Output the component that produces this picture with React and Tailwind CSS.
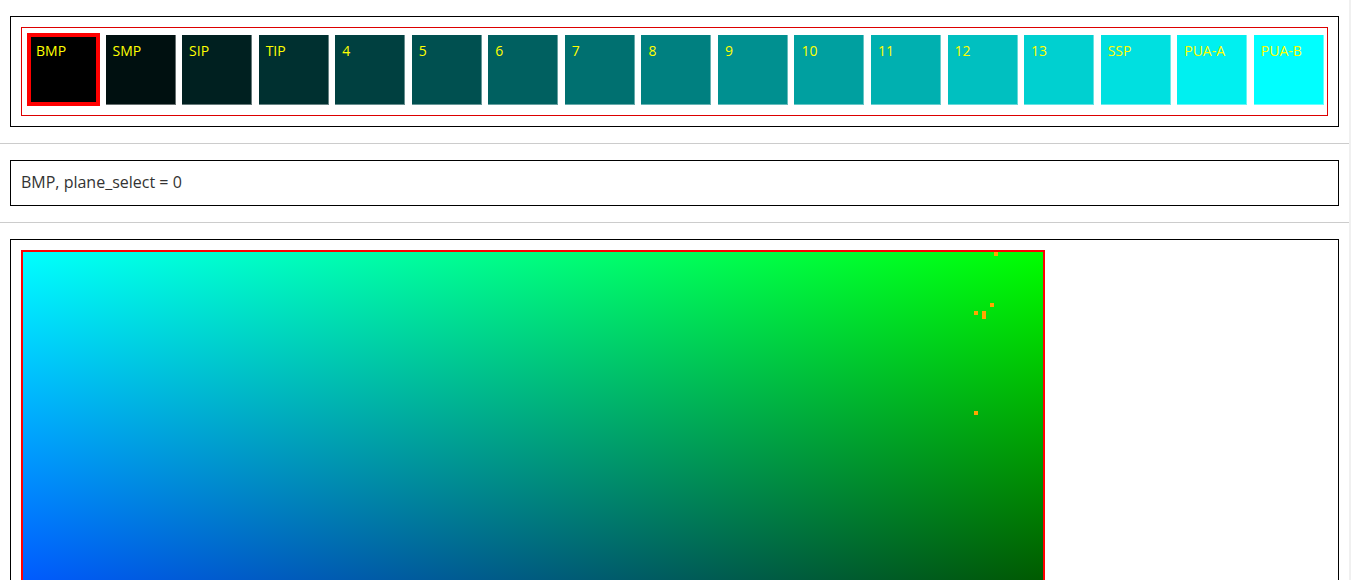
import React from "react";

const PLANES = [
  "BMP", "SMP", "SIP", "TIP", "4", "5", "6", "7", "8", "9", "10", "11", "12", "13", "SSP", "PUA-A", "PUA-B",
];

const DOTS = [
  { x: 971, y: 0, h: 4 },
  { x: 967, y: 51, h: 4 },
  { x: 951, y: 59, h: 4 },
  { x: 959, y: 59, h: 8 },
  { x: 951, y: 159, h: 4 },
];

function Tile({ name, index, selected }) {
  const v = Math.min(255, index * 16);
  return (
    <div
      className="relative w-[70px] h-[70px] shrink-0 box-border border-r border-b border-white/40"
      style={{ backgroundColor: `rgb(0, ${v}, ${v})` }}
    >
      <div className="pt-[5px] pl-[7px] text-[14px] leading-[21px] text-[#ffff00] whitespace-nowrap">
        {name}
      </div>
      {selected && (
        <div className="absolute -inset-[2px] border-4 border-[#ff0000] pointer-events-none" />
      )}
    </div>
  );
}

export default function App() {
  return (
    <div className="w-[1351px] h-[580px] overflow-hidden flex items-start bg-white font-['Open_Sans','Noto_Sans',sans-serif]">
      <div className="w-[1349px] shrink-0">
        <section className="pt-[16px] pb-[16px] px-[10px]">
          <div className="border border-black p-[10px]">
            <div className="border border-[#dd0000] flex gap-[6.55px] pl-[7px] pt-[7px] pb-[10px]">
              {PLANES.map((p, i) => (
                <Tile key={p} name={p} index={i} selected={i === 0} />
              ))}
            </div>
          </div>
        </section>
        <div className="h-px bg-[#cccccc]" />
        <section className="py-[16px] px-[10px]">
          <div className="border border-black h-[46px] box-border pt-[9px] px-[10px] text-[16px] leading-[24px] text-[#333333]">
            BMP, plane_select = 0
          </div>
        </section>
        <div className="h-px bg-[#cccccc]" />
        <section className="pt-[16px] px-[10px]">
          <div className="border border-black p-[10px]">
            <div className="relative w-[1024px] h-[514px] border-2 border-[#ff0000] bg-[image:linear-gradient(to_bottom,#00ff00,#000000),linear-gradient(to_right,#0000ff,#000000)] bg-blend-screen">
              {DOTS.map((d, i) => (
                <span
                  key={i}
                  className="absolute w-[4px] bg-[#ffa500]"
                  style={{ left: d.x, top: d.y, height: d.h }}
                />
              ))}
            </div>
          </div>
        </section>
      </div>
      <div className="w-[2px] h-full shrink-0 bg-[#f0f0f0]" />
    </div>
  );
}
